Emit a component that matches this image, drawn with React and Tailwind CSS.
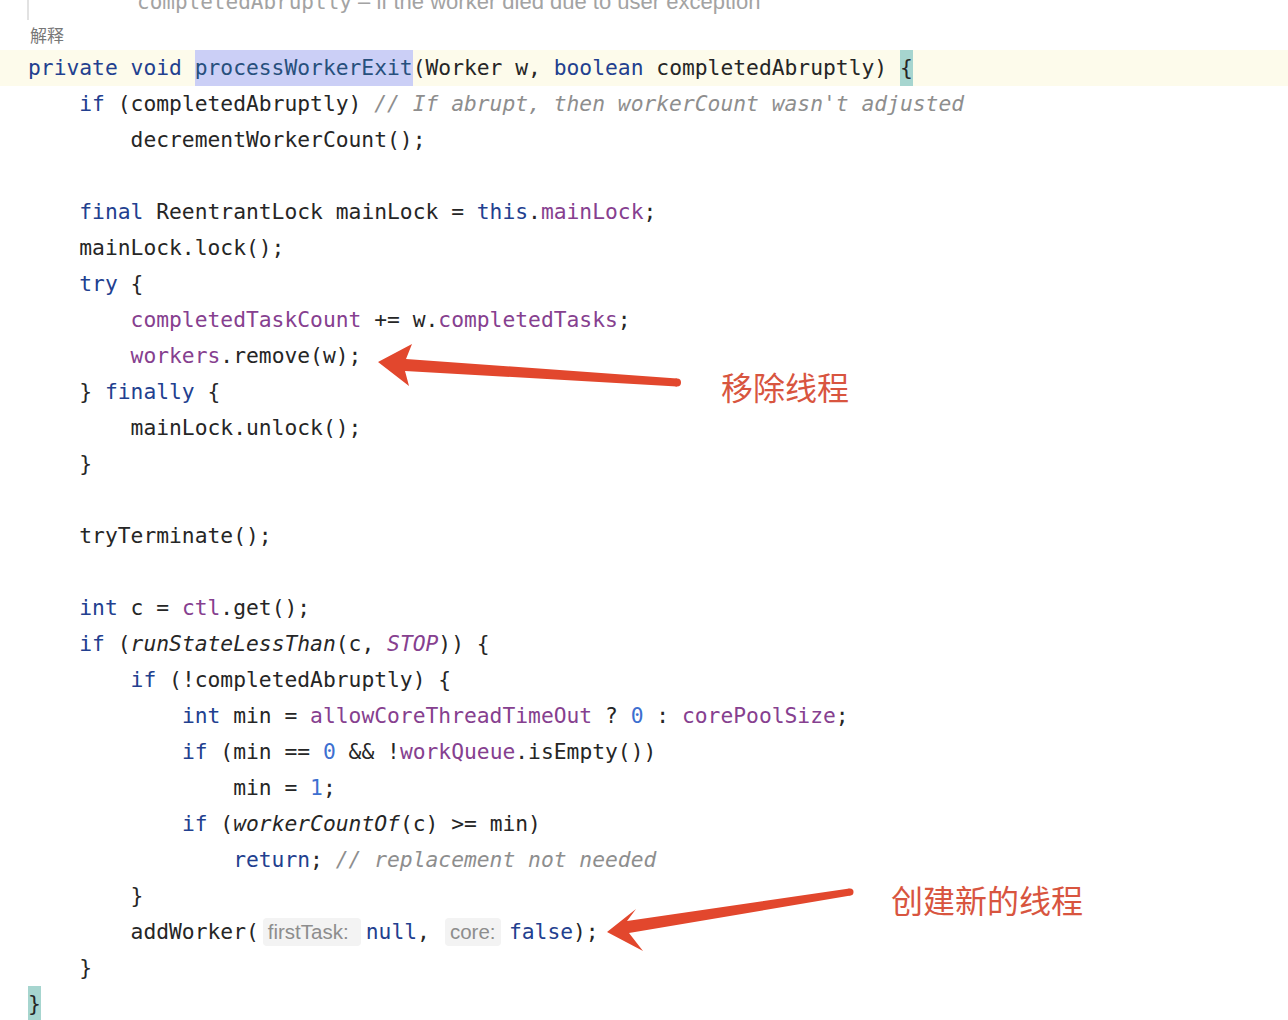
import React from 'react';

const K = 'k';
const F = 'f';
const D = 'd';
const C = 'c';
const N = 'n';
const I = 'i';
const FI = 'fi';
const SEL = 'sel';
const BR = 'br';
const HINT = 'hint';

const tokenClass = {
  k: 'text-[#22408f]',
  f: 'text-[#86408f]',
  d: 'text-[#262626]',
  c: 'text-[#8e8e8e] italic',
  n: 'text-[#3d6fd0]',
  i: 'text-[#262626] italic',
  fi: 'text-[#86408f] italic',
  sel: 'text-[#27507d] bg-[#cbcff6] h-full flex items-center',
  br: 'text-[#262626] bg-[#a6d5cf] h-full flex items-center',
};

// Code lines of processWorkerExit, one array of tokens per line
const lines = [
  [['private void ', K], ['processWorkerExit', SEL], ['(Worker w, ', D], ['boolean', K], [' completedAbruptly) ', D], ['{', BR]],
  [['    ', D], ['if', K], [' (completedAbruptly) ', D], ["// If abrupt, then workerCount wasn't adjusted", C]],
  [['        decrementWorkerCount();', D]],
  [],
  [['    ', D], ['final', K], [' ReentrantLock mainLock = ', D], ['this', K], ['.', D], ['mainLock', F], [';', D]],
  [['    mainLock.lock();', D]],
  [['    ', D], ['try', K], [' {', D]],
  [['        ', D], ['completedTaskCount', F], [' += w.', D], ['completedTasks', F], [';', D]],
  [['        ', D], ['workers', F], ['.remove(w);', D]],
  [['    } ', D], ['finally', K], [' {', D]],
  [['        mainLock.unlock();', D]],
  [['    }', D]],
  [],
  [['    tryTerminate();', D]],
  [],
  [['    ', D], ['int', K], [' c = ', D], ['ctl', F], ['.get();', D]],
  [['    ', D], ['if', K], [' (', D], ['runStateLessThan', I], ['(c, ', D], ['STOP', FI], [')) {', D]],
  [['        ', D], ['if', K], [' (!completedAbruptly) {', D]],
  [['            ', D], ['int', K], [' min = ', D], ['allowCoreThreadTimeOut', F], [' ? ', D], ['0', N], [' : ', D], ['corePoolSize', F], [';', D]],
  [['            ', D], ['if', K], [' (min == ', D], ['0', N], [' && !', D], ['workQueue', F], ['.isEmpty())', D]],
  [['                min = ', D], ['1', N], [';', D]],
  [['            ', D], ['if', K], [' (', D], ['workerCountOf', I], ['(c) >= min)', D]],
  [['                ', D], ['return', K], ['; ', D], ['// replacement not needed', C]],
  [['        }', D]],
  [['        addWorker(', D], ['firstTask:', HINT, 'w-[98px] ml-[4px] mr-[5px]'], ['null', K], [',', D], ['core:', HINT, 'w-[56px] ml-[15px] mr-[8px]'], ['false', K], [');', D]],
  [['    }', D]],
  [['}', BR]],
];

const Hint = ({ text, extra }) => (
  <span
    className={`inline-flex items-center h-[28px] px-[5px] rounded-[4px] bg-[#f3f3f3] text-[#8d8d8d] text-[20.5px] ${extra}`}
    style={{ fontFamily: '"Liberation Sans", Arial, sans-serif' }}
  >
    {text}
  </span>
);

const CodeLine = ({ tokens, index }) => (
  <div
    className={`h-9 flex items-center pl-[28px] whitespace-pre ${index === 0 ? 'bg-[#fdfbeb]' : ''}`}
  >
    {tokens.map(([text, type, extra], i) =>
      type === HINT ? (
        <Hint key={i} text={text} extra={extra} />
      ) : (
        <span key={i} className={tokenClass[type]}>
          {text}
        </span>
      )
    )}
  </div>
);

const App = () => {
  return (
    <div className="relative w-[1288px] h-[1020px] overflow-hidden bg-white">
      {/* Doc comment tail, cut by the top edge */}
      <div className="h-[20px] flex overflow-hidden">
        <div className="ml-[27px] w-[2px] h-full bg-[#e2e2e2]" />
        <div className="ml-[108px] -mt-[10px] flex items-baseline whitespace-pre text-[#a3a3a3] leading-[24px]">
          <span className="text-[21px]" style={{ fontFamily: '"DejaVu Sans Mono", monospace' }}>
            completedAbruptly
          </span>
          <span className="text-[22px]" style={{ fontFamily: '"Liberation Sans", Arial, sans-serif' }}>
            {' – if the worker died due to user exception'}
          </span>
        </div>
      </div>

      <div
        className="h-[30px] flex items-center pl-[30px] text-[17px] text-[#777777]"
        style={{ fontFamily: '"Noto Sans CJK SC", sans-serif' }}
      >
        解释
      </div>

      {/* Code */}
      <div className="text-[21.3px]" style={{ fontFamily: '"DejaVu Sans Mono", monospace' }}>
        {lines.map((tokens, i) => (
          <CodeLine key={i} tokens={tokens} index={i} />
        ))}
      </div>

      {/* Annotation arrows */}
      <svg className="absolute left-0 top-0 pointer-events-none" width="1288" height="1020">
        <polygon
          points="378,362 412,344 406,359 677,378.5 677,386.5 405,371 409,386"
          fill="#e2472d"
        />
        <circle cx="677" cy="382.5" r="4" fill="#e2472d" />
        <polygon
          points="607,932 636,909 627,921 849.4,888.5 850.6,895.5 629,933 643,951"
          fill="#e2472d"
        />
        <circle cx="850" cy="892" r="3.5" fill="#e2472d" />
      </svg>

      <div
        className="absolute left-[721px] top-[370px] text-[32px] leading-[32px] text-[#d8553f]"
        style={{ fontFamily: '"Noto Sans CJK SC", sans-serif' }}
      >
        移除线程
      </div>
      <div
        className="absolute left-[891px] top-[883px] text-[32px] leading-[32px] text-[#d8553f]"
        style={{ fontFamily: '"Noto Sans CJK SC", sans-serif' }}
      >
        创建新的线程
      </div>
    </div>
  );
};

export default App;
